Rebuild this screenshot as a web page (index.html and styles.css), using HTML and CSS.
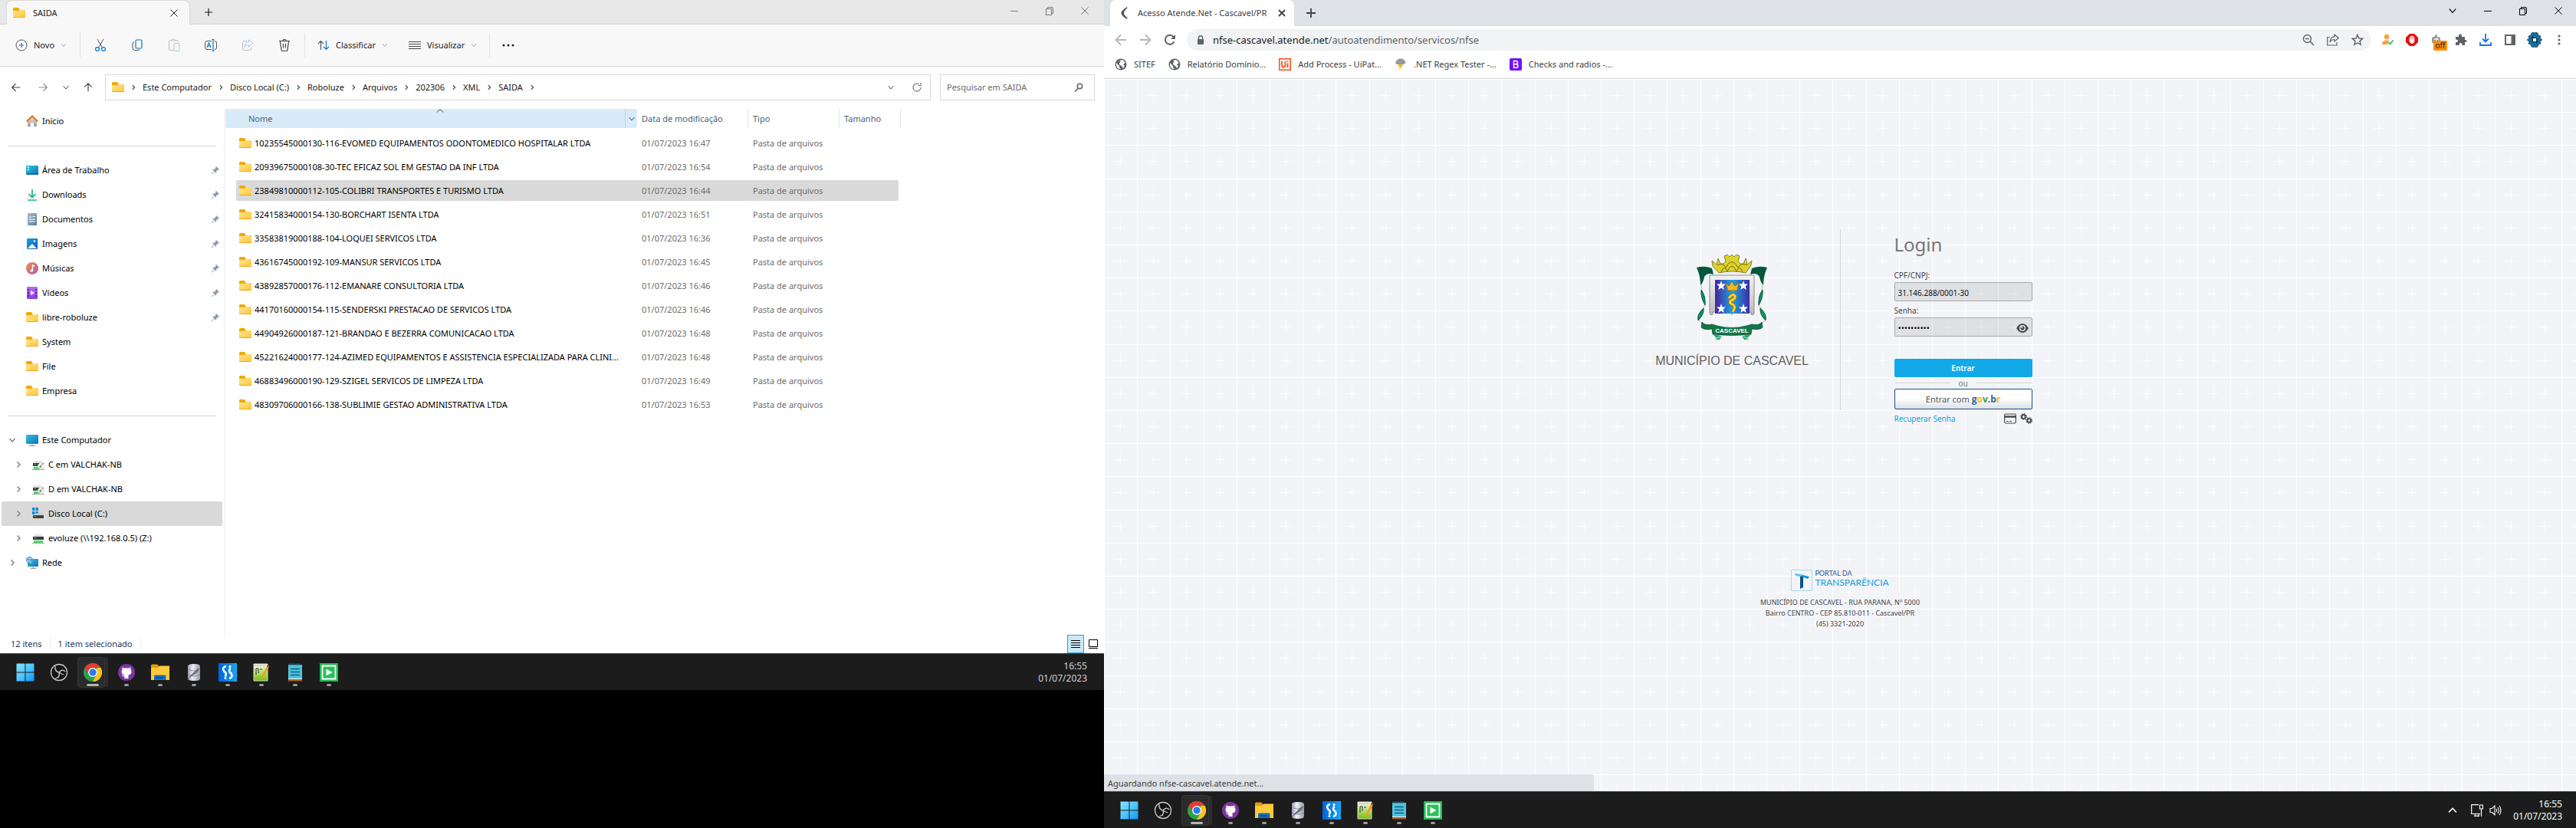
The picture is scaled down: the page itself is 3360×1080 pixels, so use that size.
FILE: index.html
```html
<!DOCTYPE html>
<html lang="pt-BR">
<head>
<meta charset="utf-8">
<title>Área de trabalho</title>
<link rel="stylesheet" href="styles.css">
</head>
<body>
<svg class="sprite" aria-hidden="true">
  <defs>
    <linearGradient id="g-folder" x1="0" y1="0" x2="1" y2="1"><stop offset="0" stop-color="#ffe596"/><stop offset="1" stop-color="#ffc637"/></linearGradient>
    <linearGradient id="g-win" x1="0" y1="0" x2="1" y2="1"><stop offset="0" stop-color="#8be0ff"/><stop offset=".5" stop-color="#4cc8fd"/><stop offset="1" stop-color="#0e93f5"/></linearGradient>
    <linearGradient id="g-screen" x1="0" y1="0" x2="1" y2="1"><stop offset="0" stop-color="#2fc5de"/><stop offset="1" stop-color="#1272b8"/></linearGradient>
    <linearGradient id="g-down" x1="0" y1="0" x2="0" y2="1"><stop offset="0" stop-color="#35d0a0"/><stop offset="1" stop-color="#0d9a7b"/></linearGradient>
    <linearGradient id="g-doc" x1="0" y1="0" x2="1" y2="1"><stop offset="0" stop-color="#a9bed3"/><stop offset="1" stop-color="#5c7c9f"/></linearGradient>
    <linearGradient id="g-pic" x1="0" y1="0" x2="1" y2="1"><stop offset="0" stop-color="#19a3e8"/><stop offset="1" stop-color="#0a58ad"/></linearGradient>
    <linearGradient id="g-music" x1="0" y1="0" x2="1" y2="1"><stop offset="0" stop-color="#ef8a4e"/><stop offset="1" stop-color="#b55fa8"/></linearGradient>
    <linearGradient id="g-video" x1="0" y1="0" x2="0" y2="1"><stop offset="0" stop-color="#b86cf0"/><stop offset="1" stop-color="#8a3fe0"/></linearGradient>
    <linearGradient id="g-house" x1="0" y1="0" x2="0" y2="1"><stop offset="0" stop-color="#e4e4e4"/><stop offset="1" stop-color="#9c9c9c"/></linearGradient>
    <linearGradient id="g-blue" x1="0" y1="0" x2="1" y2="0"><stop offset="0" stop-color="#0062dd"/><stop offset="1" stop-color="#1ba4f0"/></linearGradient>
    <linearGradient id="g-db" x1="0" y1="0" x2="1" y2="0"><stop offset="0" stop-color="#9ea0b4"/><stop offset=".4" stop-color="#eceef8"/><stop offset="1" stop-color="#9698ac"/></linearGradient>
    <linearGradient id="g-green" x1="0" y1="0" x2="0" y2="1"><stop offset="0" stop-color="#f6f9ee"/><stop offset="1" stop-color="#77c100"/></linearGradient>
    <linearGradient id="g-shield" x1="0" y1="0" x2="1" y2="0"><stop offset="0" stop-color="#4a1fa0"/><stop offset=".5" stop-color="#1aa6e4"/><stop offset="1" stop-color="#3d2ba5"/></linearGradient>
    <linearGradient id="g-silver" x1="0" y1="0" x2="0" y2="1"><stop offset="0" stop-color="#f3f3f3"/><stop offset="1" stop-color="#bababa"/></linearGradient>
  </defs>
  <symbol id="folder" viewBox="0 0 16 16"><path d="M0 2.500Q0 1 1.400 1H6.500Q7.600 1 8 2.500L8.600 4H15Q16 4 16 5V8H0Z" fill="#f2a900"/><path d="M0 5H7L9 4H15Q16 4 16 5V13Q16 14 15 14H1Q0 14 0 13Z" fill="url(#g-folder)"/><path d="M0 13H16Q16 14 15 14H1Q0 14 0 13Z" fill="#eda823"/></symbol>
  <symbol id="chev-down" viewBox="0 0 10 10"><path d="M1.500 3L5 7L8.500 3" fill="none" stroke="currentColor"/></symbol>
  <symbol id="chev-right" viewBox="0 0 10 10"><path d="M3.500 1.500L7 5L3.500 8.500" fill="none" stroke="currentColor" stroke-width="1.500"/></symbol>
  <symbol id="close" viewBox="0 0 12 12"><path d="M1.500 1.500L10.500 10.500M10.500 1.500L1.500 10.500" fill="none" stroke="currentColor"/></symbol>
  <symbol id="minus" viewBox="0 0 12 12"><path d="M1 6.500H11" stroke="currentColor"/></symbol>
  <symbol id="restore" viewBox="0 0 12 12"><path d="M1.500 3.500H8.500V11.500H1.500ZM3.500 3V1.500H9Q10.500 1.500 10.500 3V9.500H9" fill="none" stroke="currentColor"/></symbol>
  <symbol id="plus" viewBox="0 0 12 12"><path d="M6 1V11M1 6H11" fill="none" stroke="currentColor" stroke-width="1.200"/></symbol>
  <symbol id="arrow" viewBox="0 0 16 16"><path d="M14 8H2.500M7.500 2.500L2 8L7.500 13.500" fill="none" stroke="currentColor" stroke-width="1.400"/></symbol>
  <symbol id="pin" viewBox="0 0 12 12"><path d="M7 1L11 5L9.800 5.800L8.800 5.600L7.200 7.500L7 10L2 5L4.500 4.800L6.500 3.200L6.200 2Z" fill="#8c98a6"/><path d="M1 11L4.500 7.500" stroke="#8c98a6"/></symbol>
  <symbol id="drive-net" viewBox="0 0 16 16"><path d="M3 3H12L15 7H1Z" fill="#e3e3e3"/><rect x="1" y="6" width="14" height="4" fill="#3c3c3c"/><rect x="3" y="7" width="2" height="1" fill="#3fdc4f"/><rect x="2" y="11" width="12" height="4" fill="#4fd86a"/><path d="M0 14.500H16" stroke="#9e9e9e"/></symbol>
  <symbol id="drive-off" viewBox="0 0 16 16"><use href="#drive-net"/><circle cx="11.500" cy="10" r="4.200" fill="#f2f2f2" stroke="#c8c8c8" stroke-width=".5"/><path d="M9.500 12L11.500 9M10 9.500L12 11.500M12 8L13.500 8" stroke="#2f9e37" stroke-width="1.200" fill="none"/></symbol>
  <symbol id="drive-c" viewBox="0 0 16 16"><path d="M0 0H3.500V4H0ZM4.500 0H8V4H4.500ZM0 5H3.500V9H0ZM4.500 5H8V9H4.500Z" fill="#118be0"/><path d="M9 7H13L15 9H4V8Z" fill="#c9c9c9"/><rect x="1" y="10" width="14" height="4" fill="#3f3f3f"/><rect x="3" y="11" width="2" height="1" fill="#3fdc4f"/></symbol>
  <symbol id="globe" viewBox="0 0 16 16"><circle cx="8" cy="8" r="7.500" fill="#5f6368"/><path d="M2 6L6 10V12L8 14Q3 14.500 2 9ZM6 3L10 2Q13 4 13.500 6L11 8.500L13 10L11 13L9 10L6 8V6L8 5Z" fill="#fff"/></symbol>
  <symbol id="t-win" viewBox="0 0 24 24"><path d="M.5 .5H11.500V11.500H.500ZM12.500 .5H23.500V11.500H12.500ZM.5 12.500H11.500V23.500H.500ZM12.500 12.500H23.500V23.500H12.500Z" fill="url(#g-win)"/></symbol>
  <symbol id="t-obs" viewBox="0 0 24 24"><circle cx="12" cy="12" r="10.500" fill="#161417" stroke="#c9c9c9" stroke-width="1.300"/><path d="M12 12Q6 11 7 4M12 12Q16 7 20 11M12 12Q14 18 7 20M7 7Q9 12 12 12M18 15Q15 14 12 12M11 19Q13 16 12 12" fill="none" stroke="#c9c9c9" stroke-width="1.300"/></symbol>
  <symbol id="t-chrome" viewBox="0 0 24 24"><circle cx="12" cy="12" r="12" fill="#2aa24c"/><path d="M1.600 6A12 12 0 0 1 22.400 6H12L7 15Z" fill="#e33b2e"/><path d="M22.400 6A12 12 0 0 1 12 24L17.200 15L17 6Z" fill="#fcc31e"/><circle cx="12" cy="12" r="6" fill="#fff"/><circle cx="12" cy="12" r="4.700" fill="#3079e8"/></symbol>
  <symbol id="t-github" viewBox="0 0 24 24"><circle cx="12" cy="12" r="11" fill="#7d35a3"/><path d="M9.500 20V17.500Q7 18 6 15.500Q7 15 8 16.200Q9 16.500 9.600 15.500Q5.500 15 5.500 11Q5.500 9.500 6.500 8.200Q6.200 6.700 6.800 5.500Q8.500 5.700 9.600 6.700Q12 6 14.400 6.700Q15.500 5.700 17.200 5.500Q17.800 6.700 17.500 8.200Q18.500 9.500 18.500 11Q18.500 15 14.500 15.500V20Z" fill="#fff"/></symbol>
  <symbol id="t-files" viewBox="0 0 24 24"><path d="M0 3Q0 1.500 1.500 1.500H8L10.500 4V8H0Z" fill="#e09c00"/><path d="M0 6H9L11 3.500H24V22H0Z" fill="#ffc93a"/><path d="M4 22V17Q4 15.500 5.500 15.500H18Q19.500 15.500 19.500 17V22Z" fill="#0d72c4"/><path d="M7 19H16" stroke="#063d78" stroke-width="1.500"/></symbol>
  <symbol id="t-db" viewBox="0 0 24 24"><path d="M4 4Q4 1 12 1T20 4V20Q20 23 12 23T4 20Z" fill="url(#g-db)"/><path d="M4 8Q12 12 20 8M4 15Q12 19 20 15" stroke="#787a8c" fill="none" stroke-width=".8"/><path d="M5 20Q10 13 19 6Q18 12 14 14Q10 16 5 20" fill="#77787f"/><path d="M4 21Q10 13 18 7" stroke="#45464c" fill="none" stroke-width=".8"/></symbol>
  <symbol id="t-s" viewBox="0 0 24 24"><path d="M0 0H24V24H0Z" fill="url(#g-blue)"/><path d="M10 4Q5 5 6.500 9Q7 11 9 12Q11 14 8.500 17.500M14 20Q18 19 17.500 15.500Q17 13 15 12Q13 10 15.500 6.500" fill="none" stroke="#fff" stroke-width="2.600"/><circle cx="15" cy="4.500" r="1.500" fill="#fff"/><circle cx="9" cy="19.500" r="1.500" fill="#fff"/></symbol>
  <symbol id="t-npp" viewBox="0 0 24 24"><path d="M2 1H20V23H2Z" fill="url(#g-green)" stroke="#d9d9d9"/><path d="M4 3H18" stroke="#888" stroke-dasharray="1 1"/><path d="M5 7V15M8 7V13M10 8H13M5 7H8" stroke="#333" fill="none"/><path d="M20 2L22.500 4L15 18L12.500 20L13 16Z" fill="#f0a11c"/><path d="M20 2L22.500 4L21.500 6L19 4Z" fill="#8c3b2a"/></symbol>
  <symbol id="t-note" viewBox="0 0 24 24"><path d="M3 2H21V21H3Z" fill="#4fc3dc"/><path d="M3 21H21V23.500H3Z" fill="#b35a1e"/><path d="M3 20.500H21" stroke="#e8f8fc"/><path d="M5 0V3M8 0V3M11 0V3M14 0V3M17 0V3" stroke="#176d94" stroke-width="1.300"/><path d="M6 7.500H18M6 11.500H18M6 15.500H18" stroke="#125e87" stroke-width="1.600"/></symbol>
  <symbol id="t-play" viewBox="0 0 24 24"><path d="M0 0H24V24H0Z" fill="#26b85a"/><path d="M3.500 3.500H20.500V20.500H3.500Z" fill="#29c158" stroke="#fff" stroke-width="1.800"/><path d="M8.500 7.500L16.500 12L8.500 16.500Z" fill="#fff"/></symbol>
</svg>

<section class="screen screen-left" aria-label="Monitor 1">
  <div class="explorer">
    <header class="ex-title">
      <div class="ex-tab"><svg class="i16"><use href="#folder"/></svg><span>SAIDA</span><button class="ico" aria-label="Fechar guia"><svg class="i12"><use href="#close"/></svg></button></div>
      <button class="ico ex-new" aria-label="Nova guia"><svg class="i12"><use href="#plus"/></svg></button>
      <div class="win-btns"><button class="ico" aria-label="Minimizar"><svg class="i12"><use href="#minus"/></svg></button><button class="ico" aria-label="Restaurar"><svg class="i12"><use href="#restore"/></svg></button><button class="ico" aria-label="Fechar"><svg class="i12"><use href="#close"/></svg></button></div>
    </header>
    <div class="ex-tools">
      <button class="tool tool-new"><svg class="i16" viewBox="0 0 16 16"><circle cx="8" cy="8" r="7" fill="none" stroke="#555"/><path d="M8 5V11M5 8H11" stroke="#0078d4" stroke-width="1.200"/></svg><span>Novo</span><svg class="i8"><use href="#chev-down"/></svg></button>
      <button class="ico tool-ico" aria-label="Recortar"><svg class="i16" viewBox="0 0 16 16" fill="none"><path d="M4 0L10.500 11M12 0L5.500 11" stroke="#555"/><circle cx="4" cy="13" r="2.400" stroke="#0078d4" stroke-width="1.200"/><circle cx="12" cy="13" r="2.400" stroke="#0078d4" stroke-width="1.200"/></svg></button>
      <button class="ico tool-ico" aria-label="Copiar"><svg class="i16" viewBox="0 0 16 16" fill="none"><rect x="6" y="1" width="8" height="11" rx="1.500" stroke="#0078d4" stroke-width="1.200"/><path d="M4 3.500Q2 4 2 6V11Q2 14.500 5 14.500H9Q11 14.500 11 13" stroke="#555"/></svg></button>
      <button class="ico tool-ico" aria-label="Colar"><svg class="i16" viewBox="0 0 16 16" fill="none"><path d="M7 14.500H2.500Q1.500 14.500 1.500 13.500V2.500Q1.500 1.500 2.500 1.500H4M10 1.500H12Q13 1.500 13 2.500V4" stroke="#bbb"/><rect x="4.500" y=".5" width="5" height="2" rx="1" stroke="#bbb"/><rect x="8" y="5.500" width="7" height="10" rx="1" stroke="#9dcbee"/></svg></button>
      <button class="ico tool-ico" aria-label="Renomear"><svg class="i16" viewBox="0 0 16 16" fill="none"><path d="M9 2.500H3Q.500 2.500 .5 5V11Q.500 13.500 3 13.500H9M13 2.500Q15.500 2.500 15.500 5V11Q15.500 13.500 13 13.500" stroke="#555"/><path d="M11 .5V15.500M9.500 .5H12.500M9.500 15.500H12.500M3 11L5.500 5L8 11M4 9H7" stroke="#0078d4" stroke-width="1.200"/></svg></button>
      <button class="ico tool-ico" aria-label="Compartilhar"><svg class="i16" viewBox="0 0 16 16" fill="none"><path d="M7 2.500H4Q1.500 2.500 1.500 5V12Q1.500 14.500 4 14.500H10.500Q13 14.500 13 12V11" stroke="#bbb"/><path d="M9.500 1L15 5.500L9.500 10V7.500Q6 7 4 10.500Q4.500 4 9.500 3.500Z" stroke="#9dcbee"/></svg></button>
      <button class="ico tool-ico" aria-label="Excluir"><svg class="i16" viewBox="0 0 16 16" fill="none"><path d="M1 2.500H15M2.500 3L4 14Q4 15.500 6 15.500H10Q12 15.500 12 14L13.500 3M6 2.500Q6 .5 8 .5T10 2.500M6.500 6V11.500M9.500 6V11.500" stroke="#444" stroke-width="1.200"/></svg></button>
      <button class="tool tool-sort"><svg class="i16" viewBox="0 0 16 16" fill="none"><path d="M4.500 14V2.500M1 6L4.500 2.500L8 6" stroke="#555" stroke-width="1.200"/><path d="M11.500 2V13.500M8 10L11.500 13.500L15 10" stroke="#0078d4" stroke-width="1.200"/></svg><span>Classificar</span><svg class="i8"><use href="#chev-down"/></svg></button>
      <button class="tool tool-view"><svg class="i16" viewBox="0 0 16 16"><path d="M0 3.500H16M0 6.500H16M0 9.500H16M0 12.500H16" stroke="#444"/></svg><span>Visualizar</span><svg class="i8"><use href="#chev-down"/></svg></button>
      <button class="ico tool-more" aria-label="Ver mais"><svg class="i16" viewBox="0 0 16 16"><g fill="#222"><circle cx="2" cy="8" r="1.500"/><circle cx="8" cy="8" r="1.500"/><circle cx="14" cy="8" r="1.500"/></g></svg></button>
    </div>
    <div class="ex-nav">
      <div class="ex-arrows">
        <button class="ico" aria-label="Voltar"><svg class="i14"><use href="#arrow"/></svg></button><button class="ico dim flip" aria-label="Avançar"><svg class="i14"><use href="#arrow"/></svg></button><button class="ico" aria-label="Locais recentes"><svg class="i10"><use href="#chev-down"/></svg></button><button class="ico up" aria-label="Acima"><svg class="i14"><use href="#arrow"/></svg></button>
      </div>
      <nav class="crumbs" aria-label="Caminho">
        <svg class="i16"><use href="#folder"/></svg><svg class="i8"><use href="#chev-right"/></svg>
        <a href="#">Este Computador</a><svg class="i8"><use href="#chev-right"/></svg>
        <a href="#">Disco Local (C:)</a><svg class="i8"><use href="#chev-right"/></svg>
        <a href="#">Roboluze</a><svg class="i8"><use href="#chev-right"/></svg>
        <a href="#">Arquivos</a><svg class="i8"><use href="#chev-right"/></svg>
        <a href="#">202306</a><svg class="i8"><use href="#chev-right"/></svg>
        <a href="#">XML</a><svg class="i8"><use href="#chev-right"/></svg>
        <a href="#">SAIDA</a><svg class="i8"><use href="#chev-right"/></svg>
        <span class="crumb-end"><button class="ico" aria-label="Histórico"><svg class="i10"><use href="#chev-down"/></svg></button><button class="ico" aria-label="Atualizar"><svg class="i14" viewBox="0 0 14 14"><path d="M12 7A5 5 0 1 1 9.500 2.700M12 1V4.500H8.500" fill="none" stroke="#777" stroke-width="1.200"/></svg></button></span>
      </nav>
      <label class="ex-search"><input type="text" placeholder="Pesquisar em SAIDA" aria-label="Pesquisar em SAIDA"><svg class="i12" viewBox="0 0 12 12"><circle cx="7.500" cy="4.500" r="3.200" fill="none" stroke="#666" stroke-width="1.500"/><path d="M5.500 7L1 11.500" stroke="#666" stroke-width="1.700"/></svg></label>
    </div>
    <div class="ex-body">
      <aside class="side">
        <ul>
          <li><svg class="i16" viewBox="0 0 16 16"><path d="M2 7L8 2L14 7V15H10V10H6V15H2Z" fill="url(#g-house)"/><path d="M.800 8.500L8 1.500L15.200 8.500" fill="none" stroke="#e2701d" stroke-width="2"/></svg>Início</li>
        </ul>
        <hr>
        <ul>
          <li><svg class="i16" viewBox="0 0 16 16"><rect y="2" width="16" height="12" rx="1" fill="url(#g-screen)"/><path d="M2 4.500H4M2 7.500H4" stroke="#e8fbff" stroke-width="1.500"/><path d="M0 13H16" stroke="#0b528c"/></svg>Área de Trabalho<svg class="i12 pin"><use href="#pin"/></svg></li>
          <li><svg class="i16" viewBox="0 0 16 16"><path d="M8 1V11M3.500 7L8 11.500L12.500 7M2 15H14" fill="none" stroke="#1cb48c" stroke-width="1.700"/></svg>Downloads<svg class="i12 pin"><use href="#pin"/></svg></li>
          <li><svg class="i16" viewBox="0 0 16 16"><rect x="2" y="0" width="12" height="16" rx="1" fill="url(#g-doc)"/><path d="M4 5H7M8.500 4.500H12M4 8H12M4 11H12" stroke="#fff" stroke-width="1.200"/></svg>Documentos<svg class="i12 pin"><use href="#pin"/></svg></li>
          <li><svg class="i16" viewBox="0 0 16 16"><rect x="1" y="1" width="14" height="14" rx="1" fill="url(#g-pic)"/><path d="M2 14L8 8L14 14Z" fill="#fff"/><circle cx="11" cy="4.500" r="1.300" fill="#fff"/></svg>Imagens<svg class="i12 pin"><use href="#pin"/></svg></li>
          <li><svg class="i16" viewBox="0 0 16 16"><circle cx="8" cy="8" r="8" fill="url(#g-music)"/><path d="M8.500 11V4L11 5" fill="none" stroke="#fff" stroke-width="1.400"/><circle cx="7.300" cy="11" r="1.800" fill="#fff"/></svg>Músicas<svg class="i12 pin"><use href="#pin"/></svg></li>
          <li><svg class="i16" viewBox="0 0 16 16"><rect x="1" y="0" width="14" height="16" rx="1" fill="url(#g-video)"/><path d="M3 3V14M13 3V14" stroke="#4b1a8e" stroke-width="1.600" stroke-dasharray="2 2"/><path d="M6 5L11 8L6 11Z" fill="#fff"/></svg>Vídeos<svg class="i12 pin"><use href="#pin"/></svg></li>
          <li><svg class="i16"><use href="#folder"/></svg>libre-roboluze<svg class="i12 pin"><use href="#pin"/></svg></li>
          <li><svg class="i16"><use href="#folder"/></svg>System</li>
          <li><svg class="i16"><use href="#folder"/></svg>File</li>
          <li><svg class="i16"><use href="#folder"/></svg>Empresa</li>
        </ul>
        <hr>
        <ul class="tree">
          <li><svg class="i10 open"><use href="#chev-down"/></svg><svg class="i16" viewBox="0 0 16 16"><rect y="1" width="16" height="12" rx="1" fill="url(#g-screen)"/><path d="M8 13V15M4 15.500H12" stroke="#8b949c"/></svg>Este Computador</li>
          <li class="sub"><svg class="i10"><use href="#chev-right"/></svg><svg class="i16"><use href="#drive-off"/></svg>C em VALCHAK-NB</li>
          <li class="sub"><svg class="i10"><use href="#chev-right"/></svg><svg class="i16"><use href="#drive-off"/></svg>D em VALCHAK-NB</li>
          <li class="sub current"><svg class="i10"><use href="#chev-right"/></svg><svg class="i16"><use href="#drive-c"/></svg>Disco Local (C:)</li>
          <li class="sub"><svg class="i10"><use href="#chev-right"/></svg><svg class="i16"><use href="#drive-net"/></svg>evoluze (\\192.168.0.5) (Z:)</li>
          <li><svg class="i10"><use href="#chev-right"/></svg><svg class="i16" viewBox="0 0 16 16"><rect x="2" y="3" width="14" height="10" rx="1" fill="url(#g-screen)"/><path d="M9 13V15M6 15.500H13" stroke="#8b949c"/><circle cx="4.500" cy="4.500" r="4.500" fill="#4fa7d9"/><path d="M2 2Q4 4 7 2M1 6Q4 4 7 8" stroke="#d9f0fb" fill="none"/></svg>Rede</li>
        </ul>
      </aside>
      <div class="files">
        <table>
          <colgroup><col class="c-name"><col class="c-date"><col class="c-type"><col class="c-size"></colgroup>
          <thead><tr>
            <th scope="col"><div class="th-name">Nome<svg class="i10 sort" viewBox="0 0 10 10"><path d="M1 6.500L5 2.500L9 6.500" fill="none" stroke="#444"/></svg><span class="th-drop"><svg class="i10"><use href="#chev-down"/></svg></span></div></th>
            <th scope="col"><div>Data de modificação</div></th><th scope="col"><div>Tipo</div></th><th scope="col"><div>Tamanho</div></th>
          </tr></thead>
          <tbody>
            <tr><td><div><svg class="i16"><use href="#folder"/></svg>10235545000130-116-EVOMED EQUIPAMENTOS ODONTOMEDICO HOSPITALAR LTDA</div></td><td><div>01/07/2023 16:47</div></td><td><div>Pasta de arquivos</div></td><td><div></div></td></tr>
            <tr><td><div><svg class="i16"><use href="#folder"/></svg>20939675000108-30-TEC EFICAZ SOL EM GESTAO DA INF LTDA</div></td><td><div>01/07/2023 16:54</div></td><td><div>Pasta de arquivos</div></td><td><div></div></td></tr>
            <tr class="selected"><td><div><svg class="i16"><use href="#folder"/></svg>23849810000112-105-COLIBRI TRANSPORTES E TURISMO LTDA</div></td><td><div>01/07/2023 16:44</div></td><td><div>Pasta de arquivos</div></td><td><div></div></td></tr>
            <tr><td><div><svg class="i16"><use href="#folder"/></svg>32415834000154-130-BORCHART ISENTA LTDA</div></td><td><div>01/07/2023 16:51</div></td><td><div>Pasta de arquivos</div></td><td><div></div></td></tr>
            <tr><td><div><svg class="i16"><use href="#folder"/></svg>33583819000188-104-LOQUEI SERVICOS LTDA</div></td><td><div>01/07/2023 16:36</div></td><td><div>Pasta de arquivos</div></td><td><div></div></td></tr>
            <tr><td><div><svg class="i16"><use href="#folder"/></svg>43616745000192-109-MANSUR SERVICOS LTDA</div></td><td><div>01/07/2023 16:45</div></td><td><div>Pasta de arquivos</div></td><td><div></div></td></tr>
            <tr><td><div><svg class="i16"><use href="#folder"/></svg>43892857000176-112-EMANARE CONSULTORIA LTDA</div></td><td><div>01/07/2023 16:46</div></td><td><div>Pasta de arquivos</div></td><td><div></div></td></tr>
            <tr><td><div><svg class="i16"><use href="#folder"/></svg>44170160000154-115-SENDERSKI PRESTACAO DE SERVICOS LTDA</div></td><td><div>01/07/2023 16:46</div></td><td><div>Pasta de arquivos</div></td><td><div></div></td></tr>
            <tr><td><div><svg class="i16"><use href="#folder"/></svg>44904926000187-121-BRANDAO E BEZERRA COMUNICACAO LTDA</div></td><td><div>01/07/2023 16:48</div></td><td><div>Pasta de arquivos</div></td><td><div></div></td></tr>
            <tr><td><div><svg class="i16"><use href="#folder"/></svg>45221624000177-124-AZIMED EQUIPAMENTOS E ASSISTENCIA ESPECIALIZADA PARA CLINI...</div></td><td><div>01/07/2023 16:48</div></td><td><div>Pasta de arquivos</div></td><td><div></div></td></tr>
            <tr><td><div><svg class="i16"><use href="#folder"/></svg>46883496000190-129-SZIGEL SERVICOS DE LIMPEZA LTDA</div></td><td><div>01/07/2023 16:49</div></td><td><div>Pasta de arquivos</div></td><td><div></div></td></tr>
            <tr><td><div><svg class="i16"><use href="#folder"/></svg>48309706000166-138-SUBLIMIE GESTAO ADMINISTRATIVA LTDA</div></td><td><div>01/07/2023 16:53</div></td><td><div>Pasta de arquivos</div></td><td><div></div></td></tr>
          </tbody>
        </table>
      </div>
    </div>
    <footer class="ex-status"><span>12 itens</span><span>1 item selecionado</span>
      <div class="views"><button class="ico view-on" aria-label="Detalhes"><svg class="i12" viewBox="0 0 12 12"><path d="M0 1.500H12M0 4.500H12M0 7.500H12M0 10.500H12" stroke="#000"/></svg></button><button class="ico" aria-label="Ícones grandes"><svg class="i12" viewBox="0 0 12 12"><path d="M.5 .5H11.500V9.500H.5ZM0 11.500H12" fill="none" stroke="#000"/></svg></button></div>
    </footer>
  </div>
  <footer class="taskbar">
    <div class="apps">
      <button class="app" aria-label="Iniciar"><svg class="i24"><use href="#t-win"/></svg></button>
      <button class="app" aria-label="OBS Studio"><svg class="i24"><use href="#t-obs"/></svg></button>
      <button class="app active" aria-label="Google Chrome"><svg class="i24"><use href="#t-chrome"/></svg></button>
      <button class="app run" aria-label="GitHub Desktop"><svg class="i24"><use href="#t-github"/></svg></button>
      <button class="app run" aria-label="Explorador de Arquivos"><svg class="i24"><use href="#t-files"/></svg></button>
      <button class="app run" aria-label="Banco de dados"><svg class="i24"><use href="#t-db"/></svg></button>
      <button class="app run" aria-label="Serviços"><svg class="i24"><use href="#t-s"/></svg></button>
      <button class="app run" aria-label="Notepad++"><svg class="i24"><use href="#t-npp"/></svg></button>
      <button class="app run" aria-label="Bloco de Notas"><svg class="i24"><use href="#t-note"/></svg></button>
      <button class="app run" aria-label="Assistente"><svg class="i24"><use href="#t-play"/></svg></button>
    </div>
    <time class="clock clock-dim">16:55<br>01/07/2023</time>
  </footer>
</section>

<section class="screen screen-right" aria-label="Monitor 2">
  <header class="ch-tabs">
    <div class="ch-tab"><svg class="i16" viewBox="0 0 16 16"><path d="M11 0Q3 5 3.500 8.500Q4 12 11 16L11.500 14Q7 11 7 8Q7 5 11.500 1.500Z" fill="#555"/></svg><span>Acesso Atende.Net - Cascavel/PR</span><button class="ico" aria-label="Fechar guia"><svg class="i10" viewBox="0 0 10 10"><path d="M1 1L9 9M9 1L1 9" stroke="#3c4043" stroke-width="1.800"/></svg></button></div>
    <button class="ico ch-new" aria-label="Nova guia"><svg class="i12" viewBox="0 0 12 12"><path d="M6 0V12M0 6H12" stroke="#3c4043" stroke-width="1.800"/></svg></button>
    <div class="win-btns"><button class="ico" aria-label="Pesquisar guias"><svg class="i12"><use href="#chev-down"/></svg></button><button class="ico" aria-label="Minimizar"><svg class="i12"><use href="#minus"/></svg></button><button class="ico" aria-label="Restaurar"><svg class="i12"><use href="#restore"/></svg></button><button class="ico" aria-label="Fechar"><svg class="i12"><use href="#close"/></svg></button></div>
  </header>
  <div class="ch-bar">
    <button class="ico" aria-label="Voltar"><svg class="i16" viewBox="0 0 16 16"><path d="M15 8H2M8 1.500L1.500 8L8 14.500" fill="none" stroke="#b4b6b9" stroke-width="1.800"/></svg></button>
    <button class="ico flip" aria-label="Avançar"><svg class="i16" viewBox="0 0 16 16"><path d="M15 8H2M8 1.500L1.500 8L8 14.500" fill="none" stroke="#b4b6b9" stroke-width="1.800"/></svg></button>
    <button class="ico" aria-label="Recarregar"><svg class="i16" viewBox="0 0 16 16"><path d="M13.500 10A6 6 0 1 1 12.500 4" fill="none" stroke="#5f6368" stroke-width="2"/><path d="M15 1V7H9Z" fill="#5f6368"/></svg></button>
    <div class="omni">
      <svg class="i12" viewBox="0 0 12 12"><path d="M2 5H10V12H2Z" fill="#5f6368"/><path d="M3.500 5V3Q3.500 .7 6 .7T8.500 3V5" fill="none" stroke="#5f6368" stroke-width="1.400"/></svg>
      <span class="url"><b>nfse-cascavel.atende.net</b>/autoatendimento/servicos/nfse</span>
      <button class="ico" aria-label="Zoom"><svg class="i16" viewBox="0 0 16 16"><circle cx="6.500" cy="6.500" r="5" fill="none" stroke="#5f6368" stroke-width="1.400"/><path d="M10.500 10.500L15 15M4 6.500H9" stroke="#5f6368" stroke-width="1.600"/></svg></button>
      <button class="ico" aria-label="Compartilhar"><svg class="i16" viewBox="0 0 16 16"><path d="M4 4.500H.7V15H13V11" fill="none" stroke="#5f6368" stroke-width="1.200"/><path d="M10 1L15.300 5.500L10 10V7.500Q6 7.500 4 11Q4.500 4.500 10 3.700Z" fill="none" stroke="#5f6368" stroke-width="1.200"/></svg></button>
      <button class="ico" aria-label="Favorito"><svg class="i16" viewBox="0 0 16 16"><path d="M8 1.500L9.900 6L14.700 6.400L11 9.600L12.200 14.300L8 11.700L3.800 14.300L5 9.600L1.300 6.400L6.100 6Z" fill="none" stroke="#5f6368" stroke-width="1.400"/></svg></button>
    </div>
    <div class="exts">
      <button class="ico" aria-label="Extensão de usuário"><svg class="i16" viewBox="0 0 16 16"><circle cx="7" cy="4" r="3.200" fill="#ff9d45"/><path d="M1 14Q1 8.500 7 8.500Q9 8.500 10 9.500L8 14Z" fill="#ff9d45"/><path d="M9 11L11.500 13.500L15.500 8.500" fill="none" stroke="#27b35c" stroke-width="1.600"/></svg></button>
      <button class="ico" aria-label="Bloqueador"><svg class="i16" viewBox="0 0 16 16"><path d="M5 0H11L16 5V11L11 16H5L0 11V5Z" fill="#e90c0c"/><path d="M4.500 8V5H5.800V3H7.200V2.500H8.600V3H10V4.500H11.300V10Q10.500 13 8 13Q6 13 4.500 10Z" fill="#fff"/><path d="M5.900 4V7.500M7.300 3V7.500M8.700 3V7.500M10 4V7.500" stroke="#e90c0c" stroke-width=".4"/></svg></button>
      <button class="ico ext-fox" aria-label="Extensão desligada"><svg class="i16" viewBox="0 0 16 16"><path d="M2 12V5L5 4L8 0L9 4L13 5V12Z" fill="#9a9a9a"/><path d="M5 7Q8 4 11 7V12H5Z" fill="#e8e8e8"/><path d="M6 8V10M9.500 8V10" stroke="#333"/></svg><span class="off">off</span></button>
      <button class="ico" aria-label="Extensões"><svg class="i16" viewBox="0 0 16 16"><path d="M1 4H5Q4.500 .5 7 .5T9 4H13V8Q15.500 7.500 15.500 9.500T13 11V15H9.500Q9.500 12 7.500 12T5.500 15H1V11Q4 11 4 9T1 7.500Z" fill="#5f6368"/></svg></button>
      <button class="ico" aria-label="Downloads"><svg class="i16" viewBox="0 0 16 16"><path d="M8 0V10M4 6.500L8 10.500L12 6.500M1 11V15H15V11" fill="none" stroke="#1a73e8" stroke-width="1.800"/></svg></button>
      <button class="ico" aria-label="Painel lateral"><svg class="i16" viewBox="0 0 16 16"><path d="M1 1H15V15H1Z" fill="#5f6368"/><path d="M3 3H9.500V13H3Z" fill="#fff"/></svg></button>
      <button class="ico" aria-label="Perfil"><svg class="i20" viewBox="0 0 20 20"><path d="M6 1L9 0L10 2L11 0L14 1L15 4L18 5L17 8L20 10L17 12L18 15L15 16L14 19L11 20L10 18L9 20L6 19L5 16L2 15L3 12L0 10L3 8L2 5L5 4Z" fill="#126f9c" stroke="#073d58" stroke-width=".7"/><path d="M5 7.500H12.500V15M15 12.500H7.500V5" fill="none" stroke="#062f44"/><rect x="8" y="8" width="4" height="4" fill="#fff"/></svg></button>
      <button class="ico" aria-label="Menu"><svg class="i16" viewBox="0 0 16 16"><g fill="#5f6368"><circle cx="8" cy="3" r="1.500"/><circle cx="8" cy="8" r="1.500"/><circle cx="8" cy="13" r="1.500"/></g></svg></button>
    </div>
  </div>
  <nav class="bookmarks" aria-label="Favoritos">
    <a href="#"><svg class="i16"><use href="#globe"/></svg>SITEF</a>
    <a href="#"><svg class="i16"><use href="#globe"/></svg>Relatório Domínio...</a>
    <a href="#"><svg class="i16" viewBox="0 0 16 16"><path d="M0 0H16V16H0Z" fill="#f4511e"/><path d="M1.500 1.500H14.500V14.500H1.500Z" fill="#fff4ef"/><path d="M4 4V9Q4 11.500 6.200 11.500T8.400 9V4M11.500 6.500V12M11.500 3.500V5" fill="none" stroke="#f4511e" stroke-width="1.800"/></svg>Add Process - UiPat...</a>
    <a href="#"><svg class="i16" viewBox="0 0 16 16"><path d="M6 6H12L9.500 9H11.500L5 16L7 11H4.500Z" fill="#f6bd1e"/><path d="M3 8Q0 7 2 4Q4 0 8 .5Q12 0 13 3Q16 5 13 7.500L11 8H6Z" fill="#999"/></svg>.NET Regex Tester -...</a>
    <a href="#"><svg class="i16" viewBox="0 0 16 16"><rect width="16" height="16" rx="2" fill="#7411f5"/><path d="M5.500 3.500H8.500Q10.500 3.500 10.500 5.500T8.500 7.700H5.500ZM5.500 7.700H9Q11 7.700 11 10T9 12.300H5.500Z" fill="none" stroke="#fff" stroke-width="1.400"/></svg>Checks and radios -...</a>
  </nav>
  <main class="page">
    <div class="login">
      <div class="city">
        <svg class="crest" viewBox="0 0 92 112" role="img" aria-label="Brasão de Cascavel">
          <path d="M20 8L26 13L28 5L31 12L35 12L38 9L36 2L40 0L43 3L46 0L49 3L52 0L56 2L54 9L57 12L61 12L64 5L66 13L72 8L71 14L64 24Q46 20 29 24L21 15Z" fill="#dcd22b" stroke="#6f6a12" stroke-width=".8"/>
          <path d="M32 23Q36 12 40 22Q46 8 52 22Q56 12 60 23M27 14Q35 10 38 17Q46 2 54 17Q58 10 66 14" fill="none" stroke="#6f6a12"/>
          <path d="M0 17Q10 14 20 18L22 26Q14 23 10 29Q9 36 5 40Q5 28 0 17ZM92 17Q82 14 72 18L70 26Q78 23 82 29Q83 36 87 40Q87 28 92 17Z" fill="#00593a"/>
          <path d="M6 46Q12 54 11 66Q5 56 6 46ZM86 46Q80 54 81 66Q87 56 86 46ZM9 70Q10 78 2 86Q0 78 9 70ZM83 70Q82 78 90 86Q92 78 83 70Z" fill="#0a9560" stroke="#04583a"/>
          <path d="M6 40L7 46M86 40L85 46M11 66L8 70M81 66L84 70M3 86L9 92M89 86L83 92" stroke="#aab7b0"/>
          <path d="M17 27H75V76Q75 80 71 78V75H21V78Q17 80 17 76Z" fill="url(#g-silver)" stroke="#777" stroke-width=".8"/>
          <path d="M24 33H69V77H47L46 79L45 77H24Z" fill="url(#g-shield)"/>
          <path d="M40 44L38 37L42 41L46 35L50 41L55 37L53 47H40Z" fill="#f3b71e" stroke="#8a5606" stroke-width=".7"/>
          <path d="M42 57Q47 50 50 54Q51 58 45 60Q41 63 47 65Q52 68 47 75" fill="none" stroke="#8b6508" stroke-width="4.500"/><path d="M42 57Q47 50 50 54Q51 58 45 60Q41 63 47 65Q52 68 47 75" fill="none" stroke="#ffd12d" stroke-width="3"/>
          <g fill="#fff"><path id="star" d="M32 34L33.500 38.500L38 38.500L34.500 41.500L36 46L32 43.500L28 46L29.500 41.500L26 38.500L30.500 38.500Z"/><use href="#star" x="29"/><use href="#star" y="30"/><use href="#star" x="29" y="30"/></g>
          <path d="M7 88Q10 93 20 91L27 93Q46 98 65 93L72 91Q82 93 85 88L86 95Q82 99 72 97L71 104Q46 107 21 104L20 97Q10 99 6 95Z" fill="#11784a" stroke="#07452b" stroke-width=".7"/>
          <path d="M21 104L26 109L32 106ZM71 104L66 109L60 106ZM24 111L33 106L30 111ZM68 111L59 106L62 111Z" fill="#27a56d"/>
          <text x="46" y="102" class="crest-text">CASCAVEL</text>
        </svg>
        <p>MUNICÍPIO DE CASCAVEL</p>
      </div>
      <div class="rule"></div>
      <form class="form">
        <h1>Login</h1>
        <label for="doc">CPF/CNPJ:</label>
        <input id="doc" type="text" value="31.146.288/0001-30">
        <label for="pwd">Senha:</label>
        <div class="pwd"><input id="pwd" type="password" value="senhasenha"><button type="button" class="ico eye" aria-label="Mostrar senha"><svg class="i16" viewBox="0 0 16 16"><path d="M0 8Q3.500 2 8 2T16 8Q12.500 14 8 14T0 8Z" fill="#4a4a4d"/><circle cx="8" cy="8" r="4" fill="#dedee0"/><circle cx="8" cy="8" r="2.500" fill="#4a4a4d"/><path d="M8 8V5L5.500 7Z" fill="#dedee0"/></svg></button></div>
        <button type="button" class="enter">Entrar</button>
        <div class="or"><span>ou</span></div>
        <button type="button" class="gov">Entrar com <strong><i class="b">g</i><i class="y">o</i><i class="g">v</i><i class="b">.b</i><i class="y">r</i></strong></button>
        <div class="links"><a href="#">Recuperar Senha</a><button type="button" class="ico" aria-label="Certificado"><svg class="i16" viewBox="0 0 16 16"><rect x=".700" y="2" width="14.600" height="12" rx="1.500" fill="none" stroke="#444" stroke-width="1.200"/><path d="M1 5.500H15" stroke="#444" stroke-width="2.400"/><path d="M3 11.500H6M7 11.500H10" stroke="#444"/></svg></button><button type="button" class="ico" aria-label="Configurações"><svg class="i16" viewBox="0 0 16 16" fill="none" stroke="#444"><circle cx="4.500" cy="5.500" r="2.400" stroke-width="1.800"/><circle cx="4.500" cy="5.500" r="3.700" stroke-width="1.400" stroke-dasharray="1.500 1.400"/><circle cx="11.700" cy="10.500" r="2.300" stroke-width="1.800"/><circle cx="11.700" cy="10.500" r="3.600" stroke-width="1.400" stroke-dasharray="1.500 1.300"/></svg></button></div>
      </form>
    </div>
    <footer class="portal">
      <a href="#" class="portal-logo"><svg class="i28" viewBox="0 0 28 28"><rect x=".5" y=".5" width="27" height="27" fill="none" stroke="#a9d6e8"/><path d="M12 8L16 7V23L12 25Z" fill="#0b4f95"/><path d="M5 5L14 6L17 8L11 9L6 8Z" fill="#69c3e6"/><path d="M15 7L24 9L22 12L16 10Z" fill="#0f9ad8"/></svg><span class="portal-name"><small>PORTAL DA</small>TRANSPARÊNCIA</span></a>
      <address>MUNICÍPIO DE CASCAVEL - RUA PARANA, Nº 5000<br>Bairro CENTRO - CEP 85.810-011 - Cascavel/PR<br>(45) 3321-2020</address>
    </footer>
    <div class="bubble">Aguardando nfse-cascavel.atende.net...</div>
  </main>
  <footer class="taskbar">
    <div class="apps">
      <button class="app" aria-label="Iniciar"><svg class="i24"><use href="#t-win"/></svg></button>
      <button class="app" aria-label="OBS Studio"><svg class="i24"><use href="#t-obs"/></svg></button>
      <button class="app active" aria-label="Google Chrome"><svg class="i24"><use href="#t-chrome"/></svg></button>
      <button class="app run" aria-label="GitHub Desktop"><svg class="i24"><use href="#t-github"/></svg></button>
      <button class="app run" aria-label="Explorador de Arquivos"><svg class="i24"><use href="#t-files"/></svg></button>
      <button class="app run" aria-label="Banco de dados"><svg class="i24"><use href="#t-db"/></svg></button>
      <button class="app run" aria-label="Serviços"><svg class="i24"><use href="#t-s"/></svg></button>
      <button class="app run" aria-label="Notepad++"><svg class="i24"><use href="#t-npp"/></svg></button>
      <button class="app run" aria-label="Bloco de Notas"><svg class="i24"><use href="#t-note"/></svg></button>
      <button class="app run" aria-label="Assistente"><svg class="i24"><use href="#t-play"/></svg></button>
    </div>
    <div class="tray">
      <button class="ico" aria-label="Ícones ocultos"><svg class="i12" viewBox="0 0 12 12"><path d="M1 8.500L6 3.500L11 8.500" fill="none" stroke="#fff" stroke-width="1.600"/></svg></button>
      <button class="ico" aria-label="Rede"><svg class="i16" viewBox="0 0 16 16"><path d="M10 .700H.700V12.500H12M4 15.300H11M5.500 12.500V15M10 12.500V15M11.500 1H15.500V6H11.500ZM13.500 6V16" fill="none" stroke="#fff" stroke-width="1.200"/></svg></button>
      <button class="ico" aria-label="Som"><svg class="i16" viewBox="0 0 16 16"><path d="M1 5.500H3.500L7 2V14L3.500 10.500H1ZM9 6Q10 8 9 10M11 4Q13.500 8 11 12M13 2Q17 8 13 14" fill="none" stroke="#fff" stroke-width="1.100"/></svg></button>
    </div>
    <time class="clock">16:55<br>01/07/2023</time>
  </footer>
</section>
</body>
</html>
```
FILE: styles.css
```css
* { box-sizing: border-box; }

body {
  margin: 0;
  min-height: 100vh;
  display: grid;
  grid-template-columns: 3fr 4fr;
  align-items: start;
  background: #000;
  font: 11px/16px "Noto Sans", sans-serif;
  color: #1a1a1a;
}

svg { flex: none; display: block; }
.sprite { position: absolute; width: 0; height: 0; }
button, input { font: inherit; color: inherit; margin: 0; }
button { background: none; border: 0; padding: 0; }
a { color: inherit; text-decoration: none; }
ul { list-style: none; margin: 0; padding: 0; }

.i8 { width: 8px; height: 8px; }
.i10 { width: 10px; height: 10px; }
.i12 { width: 12px; height: 12px; }
.i14 { width: 14px; height: 14px; }
.i16 { width: 16px; height: 16px; }
.i20 { width: 20px; height: 20px; }
.i24 { width: 24px; height: 24px; }
.i28 { width: 28px; height: 28px; }

.ico { display: flex; flex: none; align-items: center; justify-content: center; }
.dim { opacity: .6; }
.flip svg { transform: scaleX(-1); }
.up svg { transform: rotate(90deg); }

.screen { display: flex; flex-direction: column; min-width: 0; }
.screen-left { aspect-ratio: 16 / 10; }
.screen-right { aspect-ratio: 16 / 9; background: #fff; }

/* file explorer */
.explorer { flex: 1; display: flex; flex-direction: column; background: #fff; }
.ex-title { display: flex; height: 32px; padding-left: 8px; background: #e8e8e8; border-bottom: 1px solid #d6d6d6; }
.ex-tab { display: flex; align-items: center; width: 240px; height: 32px; padding: 0 14px 0 8px; gap: 10px; background: #f8f8f8; border-radius: 8px 8px 0 0; border: 1px solid #dadada; border-bottom: 0; }
.ex-tab span { flex: 1; }
.ex-new { width: 48px; }
.win-btns { display: flex; margin-left: auto; height: 28px; color: #777; padding-right: 2px; }
.win-btns .ico { width: 46px; }
.screen-right .win-btns { color: #000; padding-right: 0; }

.ex-tools { display: flex; align-items: center; height: 55px; padding-left: 20px; background: #f8f8f8; border-bottom: 1px solid #d8d8d8; }
.tool { display: flex; align-items: center; height: 32px; gap: 8px; color: #222; }
.tool svg:last-child { color: #888; }
.tool-new { width: 85px; border-right: 1px solid #e2e2e2; }
.tool-ico { width: 48px; }
.tool-new + .tool-ico { margin-left: 2px; }
.tool-sort { border-left: 1px solid #e2e2e2; padding-left: 16px; width: 136px; margin-left: 2px; }
.tool-view { width: 106px; border-right: 1px solid #e2e2e2; }
.tool-more { width: 48px; height: 32px; }

.ex-nav { display: flex; padding: 10px 12px 11px 8px; }
.ex-arrows { display: flex; width: 129px; color: #444; }
.ex-arrows .ico { width: 26px; }
.ex-arrows .ico:nth-child(2) { width: 44px; }
.ex-arrows .ico:nth-child(3) { width: 16px; }
.ex-arrows .ico:nth-child(4) { width: 42px; }
.crumbs { flex: 1; display: flex; align-items: center; gap: 8px; height: 34px; border: 1px solid #d9d9d9; padding-left: 8px; color: #444; }
.crumbs a { color: #1a1a1a; }
.crumb-end { display: flex; margin-left: auto; }
.crumb-end .ico { width: 34px; }
.ex-search { display: flex; align-items: center; width: 202px; height: 34px; margin-left: 12px; border: 1px solid #d9d9d9; padding: 0 14px 0 8px; }
.ex-search input { flex: 1; min-width: 0; border: 0; padding: 0; background: none; outline: 0; }
.ex-search input::placeholder { color: #6b6b6b; opacity: 1; }

.ex-body { flex: 1; display: flex; }
.side { width: 293px; border-right: 1px solid #efefef; }
.side li { display: flex; align-items: center; height: 32px; margin: 0 2px; padding-left: 32px; gap: 5px; color: #000; }
.side .pin { margin-left: auto; margin-right: 3px; }
.side hr { height: 1px; border: 0; background: #d2d2d2; margin: 16px 10px 15px; }
.side .tree li { padding-left: 9px; gap: 13px; }
.side .tree li svg + svg { margin-right: -8px; }
.side .tree .sub { padding-left: 17px; }
.side .tree svg:first-child { color: #888; }
.side .tree .open:first-child { color: #222; }
.side .current { background: #d9d9d9; border-radius: 2px; }

.files { flex: 1; min-width: 0; padding-left: 1px; }
table { table-layout: fixed; width: 881px; border-collapse: collapse; }
.c-name { width: 537px; }
.c-date { width: 145px; }
.c-type { width: 119px; }
.c-size { width: 80px; }
th { padding: 0 0 4px; text-align: left; font-weight: 400; color: #4c607a; }
th div { display: flex; align-items: center; height: 25px; padding-left: 6px; border-right: 1px solid #e2e2e2; }
th .th-name { position: relative; padding-left: 30px; background: #d9ebf9; border: 0; border-radius: 2px; }
.sort { position: absolute; top: -2px; left: 50%; margin-left: 6px; }
.th-drop { display: flex; align-items: center; justify-content: center; margin-left: auto; width: 16px; height: 25px; border-left: 1px solid #bcd2e4; color: #444; }
td { padding: 2px 0; }
td div { display: flex; align-items: center; gap: 4px; height: 27px; padding-left: 6px; color: #6d6d6d; white-space: nowrap; }
td:first-child { padding-left: 14px; }
td:first-child div { padding-left: 4px; color: #000; }
td:last-child { padding-right: 3px; }
.selected div { background: #d9d9d9; }
.selected td:first-child div { border-radius: 2px 0 0 2px; }
.selected td:last-child div { border-radius: 0 2px 2px 0; }

.ex-status { display: flex; align-items: center; height: 24px; padding: 0 4px 0 14px; color: #1e395b; }
.ex-status > span { padding-right: 10px; margin-right: 10px; border-right: 1px solid #eee; }
.views { display: flex; align-self: stretch; margin-left: auto; gap: 2px; }
.views .ico { width: 20px; }
.views .view-on { width: 22px; background: #cce8f8; border: 1px solid #26a0da; }

/* taskbar */
.taskbar { display: flex; align-items: center; height: 48px; padding: 0 18px 0 11px; background: #1c1c1c; border-top: 1px solid #454545; }
.screen-left .taskbar { padding-right: 22px; }
.apps { display: flex; }
.app { position: relative; display: flex; align-items: center; justify-content: center; width: 44px; height: 40px; }
.app.run::after, .app.active::after { content: ""; position: absolute; bottom: 2px; left: 50%; width: 6px; height: 3px; margin-left: -3px; border-radius: 2px; background: #9a9a9a; }
.app.active::after { width: 16px; margin-left: -8px; background: #b5b5b0; }
.app.active::before { content: ""; position: absolute; inset: 0 6px 0 2px; border-radius: 4px; background: #2b2b2b; border: 1px solid #363636; box-shadow: 5px 0 0 -1px #2b2b2b; }
.app svg { position: relative; }
.tray { display: flex; align-items: center; margin-left: auto; margin-right: 15px; gap: 8px; }
.tray .ico:first-child { margin-right: 10px; }
.clock { font-size: 12px; text-align: right; color: #fff; }
.clock-dim { margin-left: auto; color: #d0d0d0; }

/* browser */
.ch-tabs { display: flex; height: 34px; padding-left: 8px; background: #dee1e6; }
.ch-tab { display: flex; align-items: center; width: 240px; padding: 0 11px; gap: 9px; background: #fff; border-radius: 8px 8px 0 0; color: #3c4043; }
.ch-tab span { flex: 1; white-space: nowrap; }
.ch-new { width: 44px; }
.ch-bar { display: flex; align-items: center; height: 36px; padding: 0 6px; }
.ch-bar > .ico { width: 32px; }
.omni { flex: 1; display: flex; align-items: center; height: 28px; margin-left: 6px; padding: 0 2px 0 12px; border-radius: 14px; background: #f1f3f4; font-size: 13px; }
.url { flex: 1; margin-left: 10px; color: #5f6368; }
.url b { font-weight: 400; color: #202124; }
.omni .ico { width: 32px; }
.exts { display: flex; margin-left: 5px; }
.exts .ico { width: 32px; height: 28px; }
.ext-fox { position: relative; }
.off { position: absolute; left: 12px; top: 15px; width: 18px; height: 13px; border-radius: 2px; background: #ff8c00; font-size: 10px; line-height: 12px; color: #222; }
.bookmarks { display: flex; gap: 17px; height: 33px; padding: 6px 14px 0; border-bottom: 1px solid #d5d7da; color: #3c4043; }
.bookmarks a { display: flex; align-items: center; gap: 9px; height: 16px; }

.page {
  position: relative;
  flex: 1;
  padding-top: 197px;
  background-color: #f2f4f8;
  background-image: url("data:image/svg+xml,%3Csvg xmlns='http://www.w3.org/2000/svg' xmlns:xlink='http://www.w3.org/1999/xlink' width='216' height='216'%3E%3Cdefs%3E%3CradialGradient id='f'%3E%3Cstop offset='0' stop-color='%23fff'/%3E%3Cstop offset='1' stop-color='%23fff' stop-opacity='0'/%3E%3C/radialGradient%3E%3Cg id='c'%3E%3Cpath d='M9 21H33V22H9ZM21 9H22V33H21Z' fill='url(%23f)'/%3E%3C/g%3E%3Cg id='r'%3E%3Cuse xlink:href='%23c'/%3E%3Cuse xlink:href='%23c' x='43'/%3E%3Cuse xlink:href='%23c' x='86'/%3E%3Cuse xlink:href='%23c' x='130'/%3E%3Cuse xlink:href='%23c' x='173'/%3E%3C/g%3E%3C/defs%3E%3Cpath d='M0 .5H216M0 43.5H216M0 86.5H216M0 130.5H216M0 173.5H216M.5 0V216M43.5 0V216M86.5 0V216M130.5 0V216M173.5 0V216' stroke='%23fff'/%3E%3Cuse xlink:href='%23r'/%3E%3Cuse xlink:href='%23r' y='43'/%3E%3Cuse xlink:href='%23r' y='86'/%3E%3Cuse xlink:href='%23r' y='130'/%3E%3Cuse xlink:href='%23r' y='173'/%3E%3C/svg%3E");
}

.login { display: grid; grid-template-columns: 281px 1px 281px; justify-content: center; }
.rule { height: 234px; background: #d4d6da; }
.city { display: flex; flex-direction: column; align-items: center; padding-top: 32px; }
.crest { width: 92px; height: 112px; }
.crest-text { font: bold 8px "Liberation Sans", sans-serif; fill: #fff; text-anchor: middle; }
.city p { margin: 16px 0 0; font: 16px/22px "Liberation Sans", sans-serif; color: #606060; }
.form { display: flex; flex-direction: column; width: 250px; padding-left: 70px; font: 10px/14px "Noto Sans", sans-serif; color: #444; }
h1 { margin: 3px 0 17px; font-size: 24px; font-weight: 400; line-height: 32px; color: #777; }
.form label { height: 16px; }
.form input { width: 100%; height: 25px; padding: 2px 4px 0; border: 1px solid #a9a9ab; border-radius: 2px; background: rgba(0, 0, 0, .08); color: #111; }
.form #doc { margin-bottom: 5px; }
.form #pwd { font-size: 11px; }
.pwd { position: relative; margin-bottom: 29px; }
.eye { position: absolute; right: 5px; top: 6px; }
.enter { height: 24px; border-radius: 2px; background: #12a9e8; color: #fff; font-weight: 600; }
.or { display: flex; align-items: center; gap: 10px; height: 15px; color: #777; }
.or::before, .or::after { content: ""; flex: 1; height: 1px; background: #d4d6da; }
.gov { height: 27px; border: 1px solid #17508c; border-radius: 2px; background: linear-gradient(#fff 45%, #dcdfe3); font-size: 11px; color: #555; }
.gov strong { font: bold 12px "Open Sans", sans-serif; }
.gov i { font-style: normal; }
.b { color: #2864ae; }
.y { color: #fcb716; }
.g { color: #2fa03c; }
.links { display: flex; align-items: center; gap: 5px; margin-top: 4px; height: 16px; }
.links a { margin-right: auto; color: #12a0e0; }

.portal { display: flex; flex-direction: column; align-items: center; margin-top: 189px; color: #444; }
.portal-logo { display: flex; gap: 3px; }
.portal-name { font: 12px/15px Lato, sans-serif; color: #12a0dc; }
.portal-name small { display: block; font-size: 9px; line-height: 9px; color: #1c5b98; }
.portal address { margin-top: 8px; text-align: center; font: 9px/14px "Noto Sans", sans-serif; }
.bubble { position: absolute; left: 0; bottom: 0; width: 33.3%; height: 22px; padding-left: 5px; line-height: 23px; border-radius: 0 4px 0 0; background: #dee1e6; color: #3c4043; }
```
